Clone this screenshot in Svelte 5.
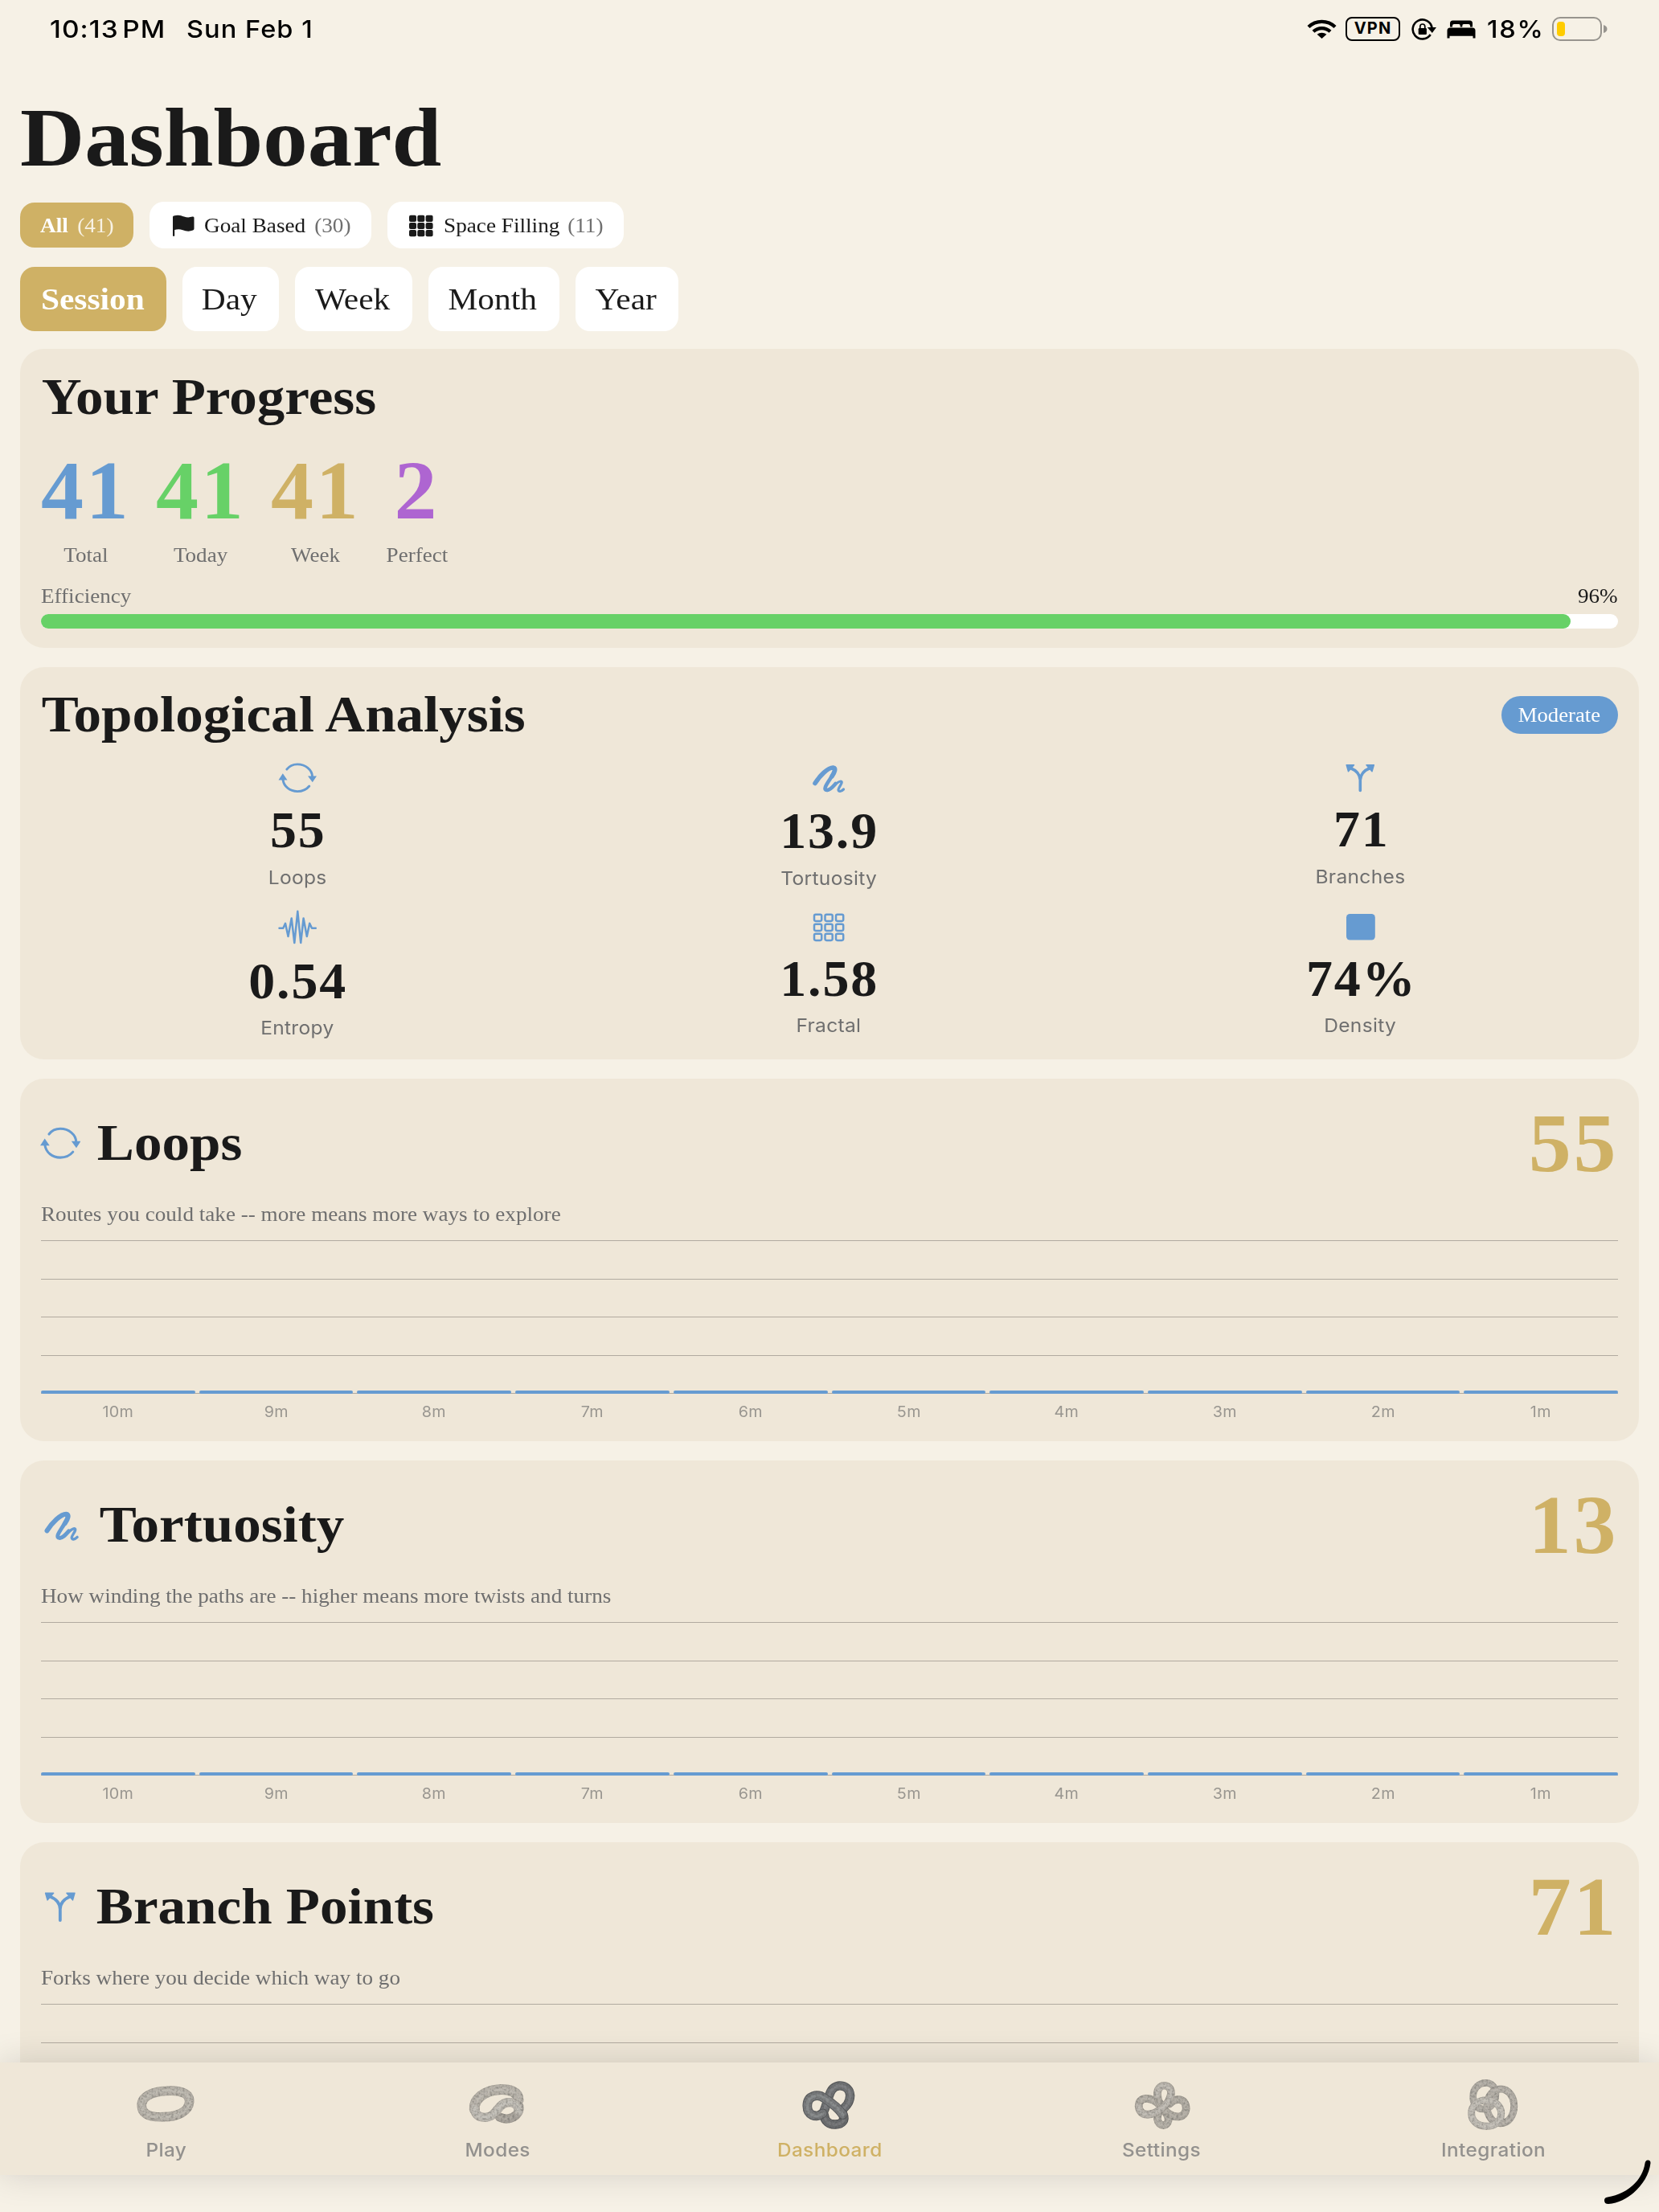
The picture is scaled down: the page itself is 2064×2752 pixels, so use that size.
<script>
  const filters = [
    { label: 'All', count: 41, icon: null, active: true },
    { label: 'Goal Based', count: 30, icon: 'flag', active: false },
    { label: 'Space Filling', count: 11, icon: 'cells', active: false }
  ];
  const ranges = ['Session', 'Day', 'Week', 'Month', 'Year'];
  const stats = [
    { value: '41', label: 'Total', tone: 'blue' },
    { value: '41', label: 'Today', tone: 'green' },
    { value: '41', label: 'Week', tone: 'gold' },
    { value: '2', label: 'Perfect', tone: 'purple' }
  ];
  const efficiency = 97;
  const metrics = [
    { icon: 'loops', value: '55', label: 'Loops', size: 'm' },
    { icon: 'scribble', value: '13.9', label: 'Tortuosity', size: 'l' },
    { icon: 'branch', value: '71', label: 'Branches', size: 's' },
    { icon: 'wave', value: '0.54', label: 'Entropy', size: 'm' },
    { icon: 'grid', value: '1.58', label: 'Fractal', size: 'xs' },
    { icon: 'square', value: '74%', label: 'Density', size: 'xs' }
  ];
  const minutes = [10, 9, 8, 7, 6, 5, 4, 3, 2, 1];
  const charts = [
    { icon: 'loops', box: '4.5 0 47 48', width: 50, title: 'Loops', value: '55', note: 'Routes you could take -- more means more ways to explore', ticks: minutes },
    { icon: 'scribble', box: '3 0 50 48', width: 53, title: 'Tortuosity', value: '13', note: 'How winding the paths are -- higher means more twists and turns', ticks: minutes },
    { icon: 'branch', box: '5 0 46 48', width: 49, title: 'Branch Points', value: '71', note: 'Forks where you decide which way to go', ticks: [] }
  ];
  const tabs = ['Play', 'Modes', 'Dashboard', 'Settings', 'Integration'];
</script>

{#snippet metricIcon(name, width, height, box)}
  <svg {width} {height} viewBox={box} class="metric-icon" aria-hidden="true">
    {#if name === 'loops'}
      <path class="line" stroke-width="2.9" d="M14.8 13.2C18 9 22.8 6.9 28 6.9C38 6.9 46.4 13.6 46.6 22.5" />
      <path class="line" stroke-width="2.9" d="M10 26C11.2 34.5 18.5 40.6 28 40.6C34.5 40.6 39.5 38 42.8 34" />
      <path class="solid" d="M41 21.5H52L46.8 29.3ZM4.5 26.5H15.5L9.8 18.3Z" />
    {:else if name === 'scribble'}
      <path class="line" stroke-width="5.6" d="M11 30.5C17 21 27 11 33.5 11C37.5 11 35.5 17 32 22" />
      <path class="line" stroke-width="4.6" d="M33.5 11C38.5 11 33 20 29.5 25.5C25 32.5 20.5 39 26 39C30 39 33 35 36.5 31" />
      <path class="line" stroke-width="3.2" d="M26 39.6C31 39 38 28 43 28C47 28.2 40 36 40 38.5C40 41.5 43.5 41 46.5 38" />
    {:else if name === 'branch'}
      <path class="line" stroke-width="3.6" d="M28.3 39.5V26.5C28 19.5 23.5 14.5 16 11.5M28.3 26.5C28.6 19.5 33 14.5 40.5 11.5" />
      <path class="solid round" d="M11.2 7.8H20.5L13.5 15.8ZM45.3 7.8H36L43 15.8Z" />
    {:else if name === 'wave'}
      <path class="line" stroke-width="2.5" d="M5.5 22.7H10.3L13 16.8L16.5 33L20.7 10.5L24.3 41L28.3 1.8L32.2 41L35.6 10.5L39.8 33L43.2 16.8L46 22.7H50.8" />
    {:else if name === 'grid'}
      {#each [0, 1, 2] as r}
        {#each [0, 1, 2] as c}
          <rect class="line" stroke-width="2.5" x={10 + c * 13.5} y={5.7 + r * 12} width="9.2" height="8.2" rx="1.8" />
        {/each}
      {/each}
    {:else}
      <rect class="solid" x="11" y="5" width="35.8" height="32.6" rx="4.5" />
    {/if}
  </svg>
{/snippet}

{#snippet tube(d, width, edge, body, shine)}
  <path {d} stroke={edge} stroke-width={width} />
  <path {d} stroke={body} stroke-width={width - 6} />
  <path {d} stroke={shine} stroke-width={width * 0.3} opacity="0.55" />
{/snippet}

{#snippet knot(name)}
  <svg class="knot" viewBox="0 0 240 201" aria-hidden="true">
    <g filter="url(#stone)" fill="none" stroke-linecap="round">
      {#if name === 'Play'}
        {@render tube('M31 107C27 70 72 51 122 49C175 45 211 58 209 90C206 126 165 146 112 146C67 148 34 140 31 107Z', 35, '#aca79e', '#b8b3aa', '#c6c2ba')}
      {:else if name === 'Modes'}
        {@render tube('M198 84C198 50 160 42 125 44C70 48 30 80 34 118', 39, '#ada89f', '#b8b3aa', '#c4c0b8')}
        {@render tube('M200 105C206 145 160 163 128 147', 34, '#9f9a92', '#a9a49c', '#b4afa7')}
        {@render tube('M34 112C34 155 85 155 106 135C125 115 134 92 164 92C184 92 198 102 199 124', 34, '#b0aba3', '#bfbbb3', '#cbc8c1')}
      {:else if name === 'Dashboard'}
        {@render tube('M95 133C110 105 115 65 128 46C145 20 195 25 197 66C197 95 175 115 160 124', 34, '#56585a', '#707274', '#8c8d8f')}
        {@render tube('M100 140C102 162 120 175 141 174C168 174 180 158 170 135', 35, '#505254', '#6a6c6e', '#848587')}
        {@render tube('M95 133C68 152 37 140 37 105C37 66 75 58 101 76C130 95 153 112 170 138', 35, '#5a5c5e', '#787a7c', '#989a9b')}
      {:else if name === 'Settings'}
        {@render tube('M35 106C35 66 85 72 112 100C122 112 146 134 146 158C142 184 110 184 105 155C104 138 112 122 124 110', 29, '#a5a097', '#b3aea5', '#c0bbb3')}
        {@render tube('M105 62C106 92 118 110 140 128C172 155 210 150 212 114C212 76 172 72 150 98', 29, '#a39e95', '#b0aba2', '#bbb6ad')}
        {@render tube('M105 66C100 17 158 20 156 58C153 84 140 98 122 113C85 146 38 146 35 106', 29, '#a8a39a', '#bab5ad', '#c9c5bd')}
      {:else}
        {@render tube('M44 70C44 38 67 19 92 19C120 19 132 45 128 72C124 98 105 117 82 117C58 117 44 100 44 70Z', 26, '#a7a39b', '#b2ada5', '#bcb8b0')}
        {@render tube('M147 42C178 42 197 72 197 105C197 142 176 170 147 170C115 170 96 140 96 105C96 70 118 42 147 42Z', 27, '#a5a199', '#b4afa7', '#bfbab2')}
        {@render tube('M92 84C124 84 149 104 149 133C149 163 125 181 95 181C62 181 38 163 38 132C38 104 60 84 92 84Z', 27, '#aeaaa2', '#c0bcb4', '#cac6bf')}
      {/if}
    </g>
  </svg>
{/snippet}

<div class="screen">
  <svg class="defs" width="0" height="0" aria-hidden="true">
    <filter id="stone" filterUnits="userSpaceOnUse" x="0" y="0" width="240" height="201" color-interpolation-filters="sRGB">
      <feTurbulence type="fractalNoise" baseFrequency="0.12" numOctaves="2" seed="4" result="n" />
      <feColorMatrix in="n" type="matrix" values="0 0 0 0 0.25  0 0 0 0 0.25  0 0 0 0 0.24  0.9 0 0 0 -0.4" result="g" />
      <feComposite in="g" in2="SourceGraphic" operator="in" result="grain" />
      <feMerge><feMergeNode in="SourceGraphic" /><feMergeNode in="grain" /></feMerge>
    </filter>
  </svg>

  <header class="status">
    <div class="clock"><span class="time">10:13<i></i>PM</span><span class="date">Sun Feb 1</span></div>
    <div class="system">
      <svg class="wifi" width="37" height="24" viewBox="0 0 37 24" aria-hidden="true">
        <g fill="none" stroke="#000" stroke-width="4.3">
          <path d="M2 9.5C11 .6 26 .6 35 9.5" />
          <path d="M8 15.3C14 9.6 23 9.6 29 15.3" />
        </g>
        <path d="M12.6 18.8C16 15.9 21 15.9 24.4 18.8L18.5 24Z" />
      </svg>
      <span class="vpn">VPN</span>
      <svg class="lock" width="31" height="27" viewBox="0 0 31 27" aria-hidden="true">
        <path d="M25.5 11.5A12 12 0 1 0 23.7 20" fill="none" stroke="#000" stroke-width="2.6" />
        <path d="M19.8 11H31L25.8 18Z" />
        <rect x="8.7" y="12" width="10.2" height="8" rx="1.3" />
        <path d="M10.8 12.5V10A3 3 0 0 1 16.8 10V12.5" fill="none" stroke="#000" stroke-width="1.7" />
      </svg>
      <svg class="bed" width="36" height="23" viewBox="0 0 36 23" aria-hidden="true">
        <path d="M4 8.5V4Q4 .5 7.5 .5H28.5Q32 .5 32 4V8.5H29V7Q29 5 27 5H21Q19.3 5 19.3 7V8.5H16.7V7Q16.7 5 15 5H9Q7 5 7 7V8.5Z" />
        <path d="M.5 22.5V13Q.5 9.5 4 9.5H32Q35.5 9.5 35.5 13V22.5H32.5V19.8H3.5V22.5Z" />
      </svg>
      <span class="percent">18%</span>
      <span class="battery"><span class="cell"><b></b></span><svg width="5" height="10" viewBox="0 0 5 10"><path d="M0 0Q4.5 1.5 4.5 5Q4.5 8.5 0 10Z" fill="#97948e" /></svg></span>
    </div>
  </header>

  <main>
    <h1>Dashboard</h1>

    <div class="filters">
      {#each filters as f}
        <button class={['filter', { active: f.active }]}>
          {#if f.icon === 'flag'}
            <svg class="flag" width="28" height="28" viewBox="0 0 28 28" aria-hidden="true">
              <path d="M0 3Q0 1.8 1.2 1.5C7 -.2 10 1 14 2.5C18 3.8 21 3.5 24.5 2.6Q26.5 2.1 26.5 4V17.5Q26.5 19 25 19.6C20 21.5 16 20.5 12.5 19.2C9 18 5.5 18 2.2 19V26Q2.2 27 1.1 27Q0 27 0 26Z" />
            </svg>
          {:else if f.icon === 'cells'}
            <svg class="cells" width="30" height="28" viewBox="0 0 30 28" aria-hidden="true">
              {#each [0, 1, 2] as r}
                {#each [0, 1, 2] as c}
                  <rect x={c * 10.3} y={0.7 + r * 9.2} width="9" height="8.2" rx="2" />
                {/each}
              {/each}
            </svg>
          {/if}
          <span class="name">{f.label}</span><span class="count">({f.count})</span>
        </button>
      {/each}
    </div>

    <div class="ranges">
      {#each ranges as r, i}
        <button class={['range', { active: i === 0 }]}><span>{r}</span></button>
      {/each}
    </div>

    <section class="card progress">
      <h2>Your Progress</h2>
      <div class="stats">
        {#each stats as s}
          <div class="stat"><strong class={s.tone}>{s.value}</strong><span>{s.label}</span></div>
        {/each}
      </div>
      <div class="efficiency"><span>Efficiency</span><span class="dark">96%</span></div>
      <div class="track"><div class="fill" style="width: {efficiency}%"></div></div>
    </section>

    <section class="card topology">
      <div class="heading"><h2>Topological Analysis</h2><span class="badge"><span>Moderate</span></span></div>
      <div class="metrics">
        {#each metrics as m}
          <div class="metric">
            <div class={['icon-box', m.size]}>{@render metricIcon(m.icon, 56, 48, '0 0 56 48')}</div>
            <strong>{m.value}</strong>
            <span>{m.label}</span>
          </div>
        {/each}
      </div>
    </section>

    {#each charts as c}
      <section class="card chart-card">
        <div class="chart-head">
          {@render metricIcon(c.icon, c.width, 51, c.box)}
          <h2>{c.title}</h2>
          <strong>{c.value}</strong>
        </div>
        <p>{c.note}</p>
        <div class="chart">
          <div class="rules">{#each [0, 1, 2, 3, 4] as _}<i></i>{/each}</div>
          <div class="bars">{#each minutes as _}<i></i>{/each}</div>
        </div>
        <div class="ticks">{#each c.ticks as m}<span>{m}m</span>{/each}</div>
      </section>
    {/each}
  </main>

  <nav>
    {#each tabs as t}
      <div class={['tab', { current: t === 'Dashboard' }]}>
        {@render knot(t)}
        <span>{t}</span>
      </div>
    {/each}
  </nav>
  <svg class="corner" width="62" height="58" viewBox="0 0 62 58" aria-hidden="true">
    <path d="M51.5 4.5Q52 .8 55 .5Q58.5 .3 58.5 4C56 28 32 53 6 55Q1 55 1 50.5Q1 47 5 46.5C28 43 48 27 51.5 4.5Z" />
  </svg>
</div>

<style>
  :global(body) { margin: 0; background: #f6f1e6; }
  .screen {
    position: relative;
    width: 2064px;
    height: 2752px;
    overflow: hidden;
    background: #f6f1e6;
    color: #1a1a1a;
    font-family: 'Liberation Serif', serif;
    --stretch: scaleX(1.067);
  }
  .defs { position: absolute; }
  h1, h2, p { margin: 0; width: max-content; transform-origin: left; transform: var(--stretch); }
  button { border: 0; font: inherit; color: inherit; padding: 0; }

  .status {
    height: 72px;
    display: flex;
    align-items: center;
    justify-content: space-between;
    padding: 0 64px 0 62px;
    box-sizing: border-box;
    color: #000;
    font: 500 30.5px/36px Inter, sans-serif;
    letter-spacing: 1px;
  }
  .clock { display: flex; }
  .clock span, .percent { transform: var(--stretch); transform-origin: left; }
  .clock .time { width: 170px; white-space: nowrap; transform: scaleX(1.095); }
  .time i { display: inline-block; width: 4px; }
  .system { display: flex; align-items: center; }
  .wifi { margin-right: 11px; }
  .vpn {
    box-sizing: border-box;
    width: 68px;
    height: 30px;
    border: 2.5px solid #000;
    border-radius: 8px;
    font: 700 20px/25px Inter, sans-serif;
    letter-spacing: 1.2px;
    text-align: center;
    margin-right: 14px;
  }
  .lock { margin-right: 13px; }
  .bed { margin-right: 14px; }
  .percent { width: 81px; letter-spacing: 1.6px; }
  .battery { display: flex; align-items: center; gap: 2px; }
  .cell {
    box-sizing: border-box;
    width: 62px;
    height: 30px;
    border: 2px solid #97948e;
    border-radius: 10px;
    padding: 4px;
    display: flex;
  }
  .cell b { width: 10px; border-radius: 4px; background: #fc0; }

  main {
    box-sizing: border-box;
    height: 2561px;
    overflow: hidden;
    padding: 39px 25px 0;
    display: flex;
    flex-direction: column;
  }
  main > * { flex: none; }
  h1 { font-size: 104px; line-height: 120px; }

  .filters { display: flex; align-items: center; gap: 20px; height: 58px; margin-top: 20px; }
  .filter {
    box-sizing: border-box;
    display: flex;
    align-items: center;
    height: 58px;
    width: 275.5px;
    padding: 1px 25px 0;
    border-radius: 18px;
    background: #fff;
    font-size: 25.5px;
  }
  .filter:last-child { width: 294.5px; }
  .filter.active { width: 141px; height: 56px; background: #cfb165; color: #fff; }
  .filter.active .name { font-weight: 700; }
  .filter svg { fill: #1a1a1a; }
  .name { transform: var(--stretch); transform-origin: left; }
  .flag { margin: 0 10.5px 0 4px; }
  .cells { margin: 0 13px 0 2px; }
  .count { margin-left: auto; color: #6f6f6f; transform: var(--stretch); transform-origin: right; }
  .active .count { color: #f8f2e4; }

  .ranges { display: flex; gap: 20px; margin-top: 23px; }
  .range {
    height: 80px;
    padding: 0 2px 2px 0;
    border-radius: 18px;
    background: #fff;
    font-size: 38.8px;
  }
  .range span { display: inline-block; transform: var(--stretch); }
  .range:nth-child(1) { width: 182px; }
  .range:nth-child(2) { width: 119.5px; }
  .range:nth-child(3) { width: 146px; }
  .range:nth-child(4) { width: 163px; }
  .range:nth-child(5) { width: 128.5px; }
  .range.active { background: #cfb165; color: #fff; font-weight: 700; }

  .card {
    box-sizing: border-box;
    background: #efe7d8;
    border-radius: 30px;
    padding: 0 26px;
  }
  h2 { font-size: 64px; line-height: 76px; padding-left: .8px; transform: scaleX(1.079); }

  .progress { height: 372px; margin-top: 22px; padding-top: 22px; }
  .stats { display: flex; gap: 32px; margin-top: 18px; }
  .stat { width: 111px; display: flex; flex-direction: column; align-items: center; color: #6f6f6f; }
  .stat:last-child { width: 77px; }
  .stat strong { font-size: 104px; line-height: 120px; letter-spacing: 2.7px; transform: scaleX(1.02); }
  .stat span { font-size: 25.4px; line-height: 30px; margin-top: 5px; transform: var(--stretch); }
  .stat .blue { color: #669bd1; }
  .stat .green { color: #67d167; }
  .stat .gold { color: #cfb165; }
  .stat .purple { color: #ae65d1; }
  .efficiency {
    display: flex;
    justify-content: space-between;
    margin-top: 21px;
    font-size: 25.4px;
    line-height: 30px;
    font-variant-ligatures: none;
    color: #6f6f6f;
  }
  .efficiency span { transform: var(--stretch); transform-origin: left; }
  .efficiency .dark { color: #1a1a1a; transform-origin: right; }
  .track { height: 18px; margin-top: 8px; border-radius: 9px; background: #fff; }
  .fill { height: 18px; border-radius: 9px; background: #67d167; }

  .topology { height: 488px; margin-top: 24px; padding-top: 21px; }
  .heading { display: flex; justify-content: space-between; align-items: center; }
  .badge {
    width: 145.5px;
    text-align: center;
    border-radius: 24px;
    background: #669bd1;
    color: #fff;
    font-size: 25px;
    line-height: 47px;
  }
  .badge span { display: inline-block; transform: var(--stretch); }
  .metrics { display: grid; grid-template-columns: repeat(3, 1fr); gap: 24px; margin: 17px 2px 0 0; }
  .metric { display: flex; flex-direction: column; align-items: center; }
  .metric strong { font-size: 64px; line-height: 60px; padding: 1px 0 0 2px; letter-spacing: 1.8px; transform: scaleX(1.03); }
  .metric span {
    font: 400 23px/30px Inter, sans-serif;
    letter-spacing: .3px;
    margin-top: 13.5px;
    color: #6f6f6f;
    transform: var(--stretch);
  }
  .icon-box.l { height: 59px; }
  .icon-box.m { height: 58px; }
  .icon-box.s { height: 57px; }
  .icon-box.xs { height: 55px; }
  .metric-icon { display: block; color: #669bd1; }
  .line { fill: none; stroke: currentColor; stroke-linecap: round; stroke-linejoin: round; }
  .solid { fill: currentColor; }
  .round { stroke: currentColor; stroke-width: 1.5; stroke-linejoin: round; }

  .chart-card { height: 451px; margin-top: 24px; padding-top: 20px; }
  .chart-head { display: flex; align-items: center; }
  .chart-head .metric-icon { margin: 0 20px 0 -1px; }
  .chart-head strong {
    margin-left: auto;
    font-size: 104px;
    line-height: 120px;
    letter-spacing: 2.7px;
    color: #cfb165;
    transform: scaleX(1.02);
    transform-origin: right;
  }
  p { margin-top: 14px; font-size: 25.45px; line-height: 30px; color: #6f6f6f; }
  .chart { display: grid; height: 191px; margin-top: 17px; }
  .rules, .bars { grid-area: 1 / 1; display: flex; }
  .rules { flex-direction: column; justify-content: space-between; }
  .rules i { height: 1px; background: #b1aaa0; }
  .bars { gap: 5px; align-items: flex-end; z-index: 1; }
  .bars i { flex: 1; height: 4.5px; border-radius: 2px; background: #669bd1; }
  .ticks { display: flex; gap: 5px; margin-top: 10px; }
  .ticks span {
    flex: 1;
    text-align: center;
    font: 400 18.5px/24px Inter, sans-serif;
    letter-spacing: .3px;
    color: #999690;
    transform: var(--stretch);
  }

  nav {
    position: absolute;
    left: 0;
    right: 0;
    top: 2566px;
    height: 140px;
    display: grid;
    grid-template-columns: repeat(5, 1fr);
    background: #efe7d8;
    box-shadow: 0 0 40px rgba(0, 0, 0, .14);
    z-index: 2;
  }
  .tab { display: flex; flex-direction: column; align-items: center; padding-top: 19px; color: #93918e; }
  .tab.current { color: #cfb165; }
  .tab span {
    margin-top: 8px;
    font: 500 22.8px/30px Inter, sans-serif;
    letter-spacing: .4px;
    transform: var(--stretch);
  }
  .knot { width: 80px; height: 67px; display: block; }
  .corner { position: absolute; left: 1995px; top: 2687px; z-index: 3; }
</style>
